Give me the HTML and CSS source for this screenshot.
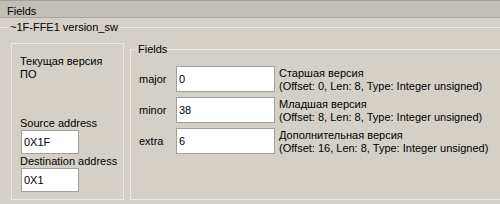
FILE: index.html
```html
<!DOCTYPE html>
<html lang="ru">
<head>
    <meta charset="UTF-8">
    <title>Fields</title>
    <link rel="stylesheet" href="styles.css">
</head>
<body>
    <div class="header">Fields</div>

    <fieldset class="version">
        <legend>~1F-FFE1 version_sw</legend>
        <div class="body">
            <div class="info">
                <div class="info-title">Текущая версия<br>ПО</div>
                <label class="addr-label">Source address</label>
                <input class="addr-input" type="text" value="0X1F">
                <label class="addr-label">Destination address</label>
                <input class="addr-input" type="text" value="0X1">
            </div>

            <fieldset class="fields">
                <legend>Fields</legend>
                <div class="row">
                    <span class="row-name">major</span>
                    <input class="row-input" type="text" value="0">
                    <div class="row-desc">Старшая версия<br>(Offset: 0, Len: 8, Type: Integer unsigned)</div>
                </div>
                <div class="row">
                    <span class="row-name">minor</span>
                    <input class="row-input" type="text" value="38">
                    <div class="row-desc">Младшая версия<br>(Offset: 8, Len: 8, Type: Integer unsigned)</div>
                </div>
                <div class="row">
                    <span class="row-name">extra</span>
                    <input class="row-input" type="text" value="6">
                    <div class="row-desc">Дополнительная версия<br>(Offset: 16, Len: 8, Type: Integer unsigned)</div>
                </div>
            </fieldset>
        </div>
    </fieldset>
</body>
</html>
```

FILE: styles.css
```css
:root {
    --face: #d4d0c8;
    --header-bg: #c3bfb8;
    --etch: #ebe8e2;
    --field-border: #a0a09c;
}

body {
    margin: 0;
    padding: 0;
    background-color: var(--face);
    color: #000;
    font-family: 'Liberation Sans', Arial, sans-serif;
    font-size: 11px;
    line-height: 13px;
    overflow: hidden;
}

.header {
    height: 12px;
    padding: 4px 7px 0;
    background-color: var(--header-bg);
    border-top: 1px solid #a3a09a;
    border-bottom: 1px solid #aaa69f;
}

.version {
    margin: 3px 0 0;
    padding: 0;
    border: none;
    border-top: 1px solid var(--etch);
}

.version > legend {
    margin-left: 8px;
    padding: 0 2px;
}

.body {
    display: flex;
    align-items: stretch;
    padding-left: 11px;
}

.info {
    display: flex;
    flex-direction: column;
    align-items: flex-start;
    width: 95px;
    height: 144px;
    margin-top: 9px;
    padding: 11px 8px 0;
    border: 1px solid var(--etch);
    white-space: nowrap;
}

.info-title {
    margin-bottom: 36px;
}

.addr-label {
    display: block;
}

.addr-input {
    width: 54px;
    height: 22px;
    margin: 0 0 1px 1px;
}

.fields {
    flex: 1;
    margin: 9px 0 0 6px;
    padding: 0 0 0 8px;
    border: 1px solid var(--etch);
    border-right: none;
}

.fields > legend {
    padding: 0;
    margin-left: -1px;
}

.row {
    display: flex;
    align-items: center;
    height: 26px;
}

.row:first-of-type {
    margin-top: 10px;
}

.row + .row {
    margin-top: 5px;
}

.row-name {
    width: 37px;
}

.row-input {
    width: 95px;
    height: 24px;
    margin-right: 4px;
}

.row-desc {
    padding-top: 1px;
    white-space: nowrap;
}

.addr-input,
.row-input {
    box-sizing: content-box;
    padding: 0 0 0 2px;
    border: 1px solid var(--field-border);
    background-color: #fff;
    color: #000;
    font-family: 'Liberation Sans', Arial, sans-serif;
    font-size: 11px;
    outline: none;
}
```
